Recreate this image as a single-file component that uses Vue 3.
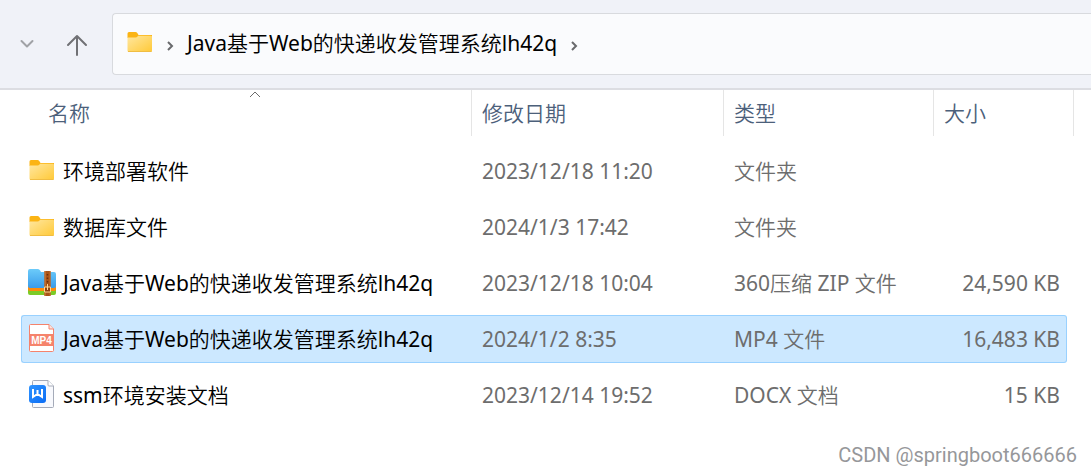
<script setup>
import { ref } from 'vue'

const folderName = 'Java基于Web的快递收发管理系统lh42q'

const files = [
  { name: '环境部署软件', date: '2023/12/18 11:20', type: '文件夹', size: '', icon: 'folder' },
  { name: '数据库文件', date: '2024/1/3 17:42', type: '文件夹', size: '', icon: 'folder' },
  { name: folderName, date: '2023/12/18 10:04', type: '360压缩 ZIP 文件', size: '24,590 KB', icon: 'zip' },
  { name: folderName, date: '2024/1/2 8:35', type: 'MP4 文件', size: '16,483 KB', icon: 'mp4' },
  { name: 'ssm环境安装文档', date: '2023/12/14 19:52', type: 'DOCX 文档', size: '15 KB', icon: 'docx' },
]

const selected = ref(3)
</script>

<template>
  <main class="explorer">
    <svg class="defs" width="0" height="0" aria-hidden="true">
      <defs>
        <linearGradient id="folder-face" x1="0" y1="0" x2="1" y2="1">
          <stop offset="0" stop-color="#ffe7a0" />
          <stop offset="1" stop-color="#ffc937" />
        </linearGradient>
        <linearGradient id="zip-face" x1="0" y1="0" x2="0" y2="1">
          <stop offset="0" stop-color="#6ccbfa" />
          <stop offset="1" stop-color="#3a9cea" />
        </linearGradient>
        <linearGradient id="doc-face" x1="0" y1="0" x2="1" y2="1">
          <stop offset="0" stop-color="#2f94ff" />
          <stop offset="1" stop-color="#0a6cf5" />
        </linearGradient>
        <symbol id="folder" viewBox="0 0 28 28">
          <path d="M1.500 5.500Q1.500 4 3 4H9.500Q10.500 4 11.300 5L12.500 7H26V10H1.500Z" fill="#fbb414" />
          <path d="M1.500 9.500H9.500Q10.800 9.500 11.500 8.500L12.200 7.700H25Q26 7.700 26 9V22.500Q26 24 24.500 24H3Q1.500 24 1.500 22.500Z" fill="url(#folder-face)" />
          <path d="M2 23.500H25.500" stroke="#f0bd43" />
        </symbol>
      </defs>
    </svg>

    <header class="toolbar">
      <button class="nav recent" type="button" aria-label="最近浏览的位置">
        <svg width="14" height="10" viewBox="0 0 14 10"><path d="M1.500 2L7 7.500L12.500 2" fill="none" stroke="#a0a2a6" stroke-width="2" stroke-linecap="round" stroke-linejoin="round" /></svg>
      </button>
      <button class="nav up" type="button" aria-label="上移一级">
        <svg width="22" height="24" viewBox="0 0 22 24"><path d="M11 22V3M2 12L11 3L20 12" fill="none" stroke="#707175" stroke-width="2" stroke-linecap="round" stroke-linejoin="round" /></svg>
      </button>
      <nav class="address" aria-label="地址栏">
        <svg class="icon" width="28" height="28"><use href="#folder" /></svg>
        <svg class="chevron" width="8" height="12" viewBox="0 0 8 12"><path d="M2 2L6 6L2 10" fill="none" stroke="#68696c" stroke-width="2" /></svg>
        <a class="crumb" href="#">{{ folderName }}</a>
        <svg class="chevron" width="8" height="12" viewBox="0 0 8 12"><path d="M2 2L6 6L2 10" fill="none" stroke="#68696c" stroke-width="2" /></svg>
      </nav>
    </header>

    <section class="content">
      <table class="files">
        <colgroup>
          <col />
          <col class="col-date" />
          <col class="col-type" />
          <col class="col-size" />
          <col class="col-end" />
        </colgroup>
        <thead>
          <tr>
            <th class="name-head" scope="col">
              <svg class="sort" width="12" height="7" viewBox="0 0 12 7"><path d="M1 6L6 1L11 6" fill="none" stroke="#6b6b6b" /></svg>
              <div class="head">名称</div>
            </th>
            <th scope="col"><div class="head">修改日期</div></th>
            <th scope="col"><div class="head">类型</div></th>
            <th scope="col"><div class="head borderless">大小</div></th>
            <td><div class="head"></div></td>
          </tr>
        </thead>
        <tbody>
          <tr v-for="(file, i) in files" :key="i" :class="{ selected: selected === i }" @click="selected = i">
            <td class="name">
              <div class="entry">
                <svg v-if="file.icon === 'folder'" class="icon" width="28" height="28"><use href="#folder" /></svg>
                <svg v-else-if="file.icon === 'zip'" class="icon" width="28" height="28" viewBox="0 0 28 28">
                  <path d="M0 18H28V25Q28 27 26 27H2Q0 27 0 25Z" fill="#7ccb27" />
                  <path d="M0 17H28V21.500Q28 23 26 23H2Q0 23 0 21Z" fill="#ff8b0b" />
                  <path d="M0 3Q0 1 2 1H9.500Q11 1 12 2.300L13 4H26Q28 4 28 6V18Q28 20 26 20H2Q0 20 0 18Z" fill="url(#zip-face)" />
                  <path d="M16.500 3H22.500V28H16.500Z" fill="#a85418" />
                  <path d="M16.500 3H18V28H16.500ZM21.500 3H22.500V28H21.500Z" fill="#c16b29" />
                  <path d="M19.500 6V17" stroke="#6e2f0b" stroke-width="1.500" stroke-dasharray="1.500 2" />
                  <path d="M16.500 19H22.500V24H16.500ZM19.500 16V22" fill="#8f430f" stroke="#ffd795" stroke-width="1" />
                </svg>
                <svg v-else-if="file.icon === 'mp4'" class="icon" width="28" height="28" viewBox="0 0 28 28">
                  <path d="M2.500 .5H21L25.500 5V26.500Q25.500 27.500 24.500 27.500H2.500Q1.500 27.500 1.500 26.500V1.500Q1.500 .5 2.500 .5Z" fill="#fff" stroke="#f5836c" />
                  <path d="M21 .5V5H25.500" fill="#fde4de" stroke="#f5836c" />
                  <rect x="1" y="10" width="25" height="12" fill="#f5836c" />
                  <text x="13.500" y="20" text-anchor="middle" class="badge">MP4</text>
                </svg>
                <svg v-else class="icon" width="28" height="28" viewBox="0 0 28 28">
                  <path d="M5.500 .5H20L25.500 6V26.500Q25.500 27.500 24.500 27.500H5.500Q4.500 27.500 4.500 26.500V1.500Q4.500 .5 5.500 .5Z" fill="#f8f9fd" stroke="#a5abb9" />
                  <path d="M20 .5V5Q20 6 21 6H25.500" fill="#fff" stroke="#a5abb9" />
                  <rect x="1" y="5" width="17" height="18" rx="3" fill="url(#doc-face)" />
                  <path d="M5 9V17L9.500 14L14 17V9M9.500 10V14" fill="none" stroke="#fff" stroke-width="2" />
                </svg>
                <span>{{ file.name }}</span>
              </div>
            </td>
            <td>{{ file.date }}</td>
            <td>{{ file.type }}</td>
            <td class="size">{{ file.size }}</td>
          </tr>
        </tbody>
      </table>
    </section>
    <footer class="watermark">CSDN @springboot666666</footer>
  </main>
</template>

<style>
body {
  margin: 0;
  background: #fff;
}
</style>

<style scoped>
.explorer {
  min-height: 100vh;
  display: flex;
  flex-direction: column;
  overflow: hidden;
  background: #fff;
  color: #000;
  font: 21px/28px "Noto Sans", "Noto Sans CJK SC DemiLight", "Noto Sans CJK SC Light", "Noto Sans CJK SC", sans-serif;
}
.defs {
  position: absolute;
}
.toolbar {
  display: flex;
  align-items: center;
  padding: 13px 0 13px 12px;
  background: #f0f2f8;
  border-bottom: 2px solid #dcdde2;
}
.nav {
  display: flex;
  align-items: center;
  justify-content: center;
  height: 40px;
  padding: 0;
  border: 0;
  background: none;
}
.recent {
  width: 29px;
}
.up {
  width: 44px;
  margin: 2px 13px 0 14px;
}
.address {
  flex: 1;
  display: flex;
  align-items: center;
  height: 60px;
  padding-left: 13px;
  border: 1px solid #d8dade;
  border-right: 0;
  border-radius: 4px 0 0 4px;
  background: #fafbfd;
}
.icon {
  flex: none;
  display: block;
}
.address .icon {
  margin-bottom: 4px;
}
.chevron {
  margin: 3px 13px 0;
}
.address .icon + .chevron {
  margin-left: 12px;
}
.crumb {
  padding-bottom: 2px;
  color: #000;
  text-decoration: none;
  white-space: nowrap;
}
.content {
  padding: 0 17px 0 21px;
}
.files {
  width: 100%;
  margin-top: -8px;
  table-layout: fixed;
  border-collapse: separate;
  border-spacing: 0 8px;
}
.col-date {
  width: 252px;
}
.col-type {
  width: 210px;
}
.col-size {
  width: 133px;
}
.col-end {
  width: 7px;
}
thead th,
thead td {
  position: relative;
  height: 49px;
  padding: 0;
  vertical-align: top;
  font-weight: 400;
  text-align: left;
  color: #4c607a;
}
.head {
  box-sizing: border-box;
  height: 46px;
  padding-left: 10px;
  border-right: 1px solid #e5e5e5;
  line-height: 46px;
}
.head.borderless {
  border-right: 0;
}
thead td .head {
  padding: 0;
}
.name-head .head {
  padding-left: 27px;
}
.sort {
  position: absolute;
  top: 1px;
  left: 228px;
}
tbody td {
  box-sizing: border-box;
  height: 48px;
  padding: 0 0 0 10px;
  border: 0 solid transparent;
  border-width: 1px 0;
  color: #6d6d6d;
  white-space: nowrap;
}
tbody .name {
  padding-left: 6px;
  border-left-width: 1px;
  border-radius: 3px 0 0 3px;
  color: #000;
}
tbody .size {
  padding-right: 6px;
  border-right-width: 1px;
  border-radius: 0 3px 3px 0;
  text-align: right;
}
.selected td {
  background: #cce8ff;
  border-color: #99d1ff;
}
.entry {
  display: flex;
  align-items: center;
  gap: 7px;
}
.entry .icon {
  margin-bottom: 3px;
}
.badge {
  fill: #fff;
  font: 700 10px "Liberation Sans", Arial, sans-serif;
}
.watermark {
  margin-top: auto;
  padding: 0 14px 6px;
  color: #96979a;
  font: 20px/28px Roboto, "Liberation Sans", sans-serif;
  text-align: right;
}
</style>
